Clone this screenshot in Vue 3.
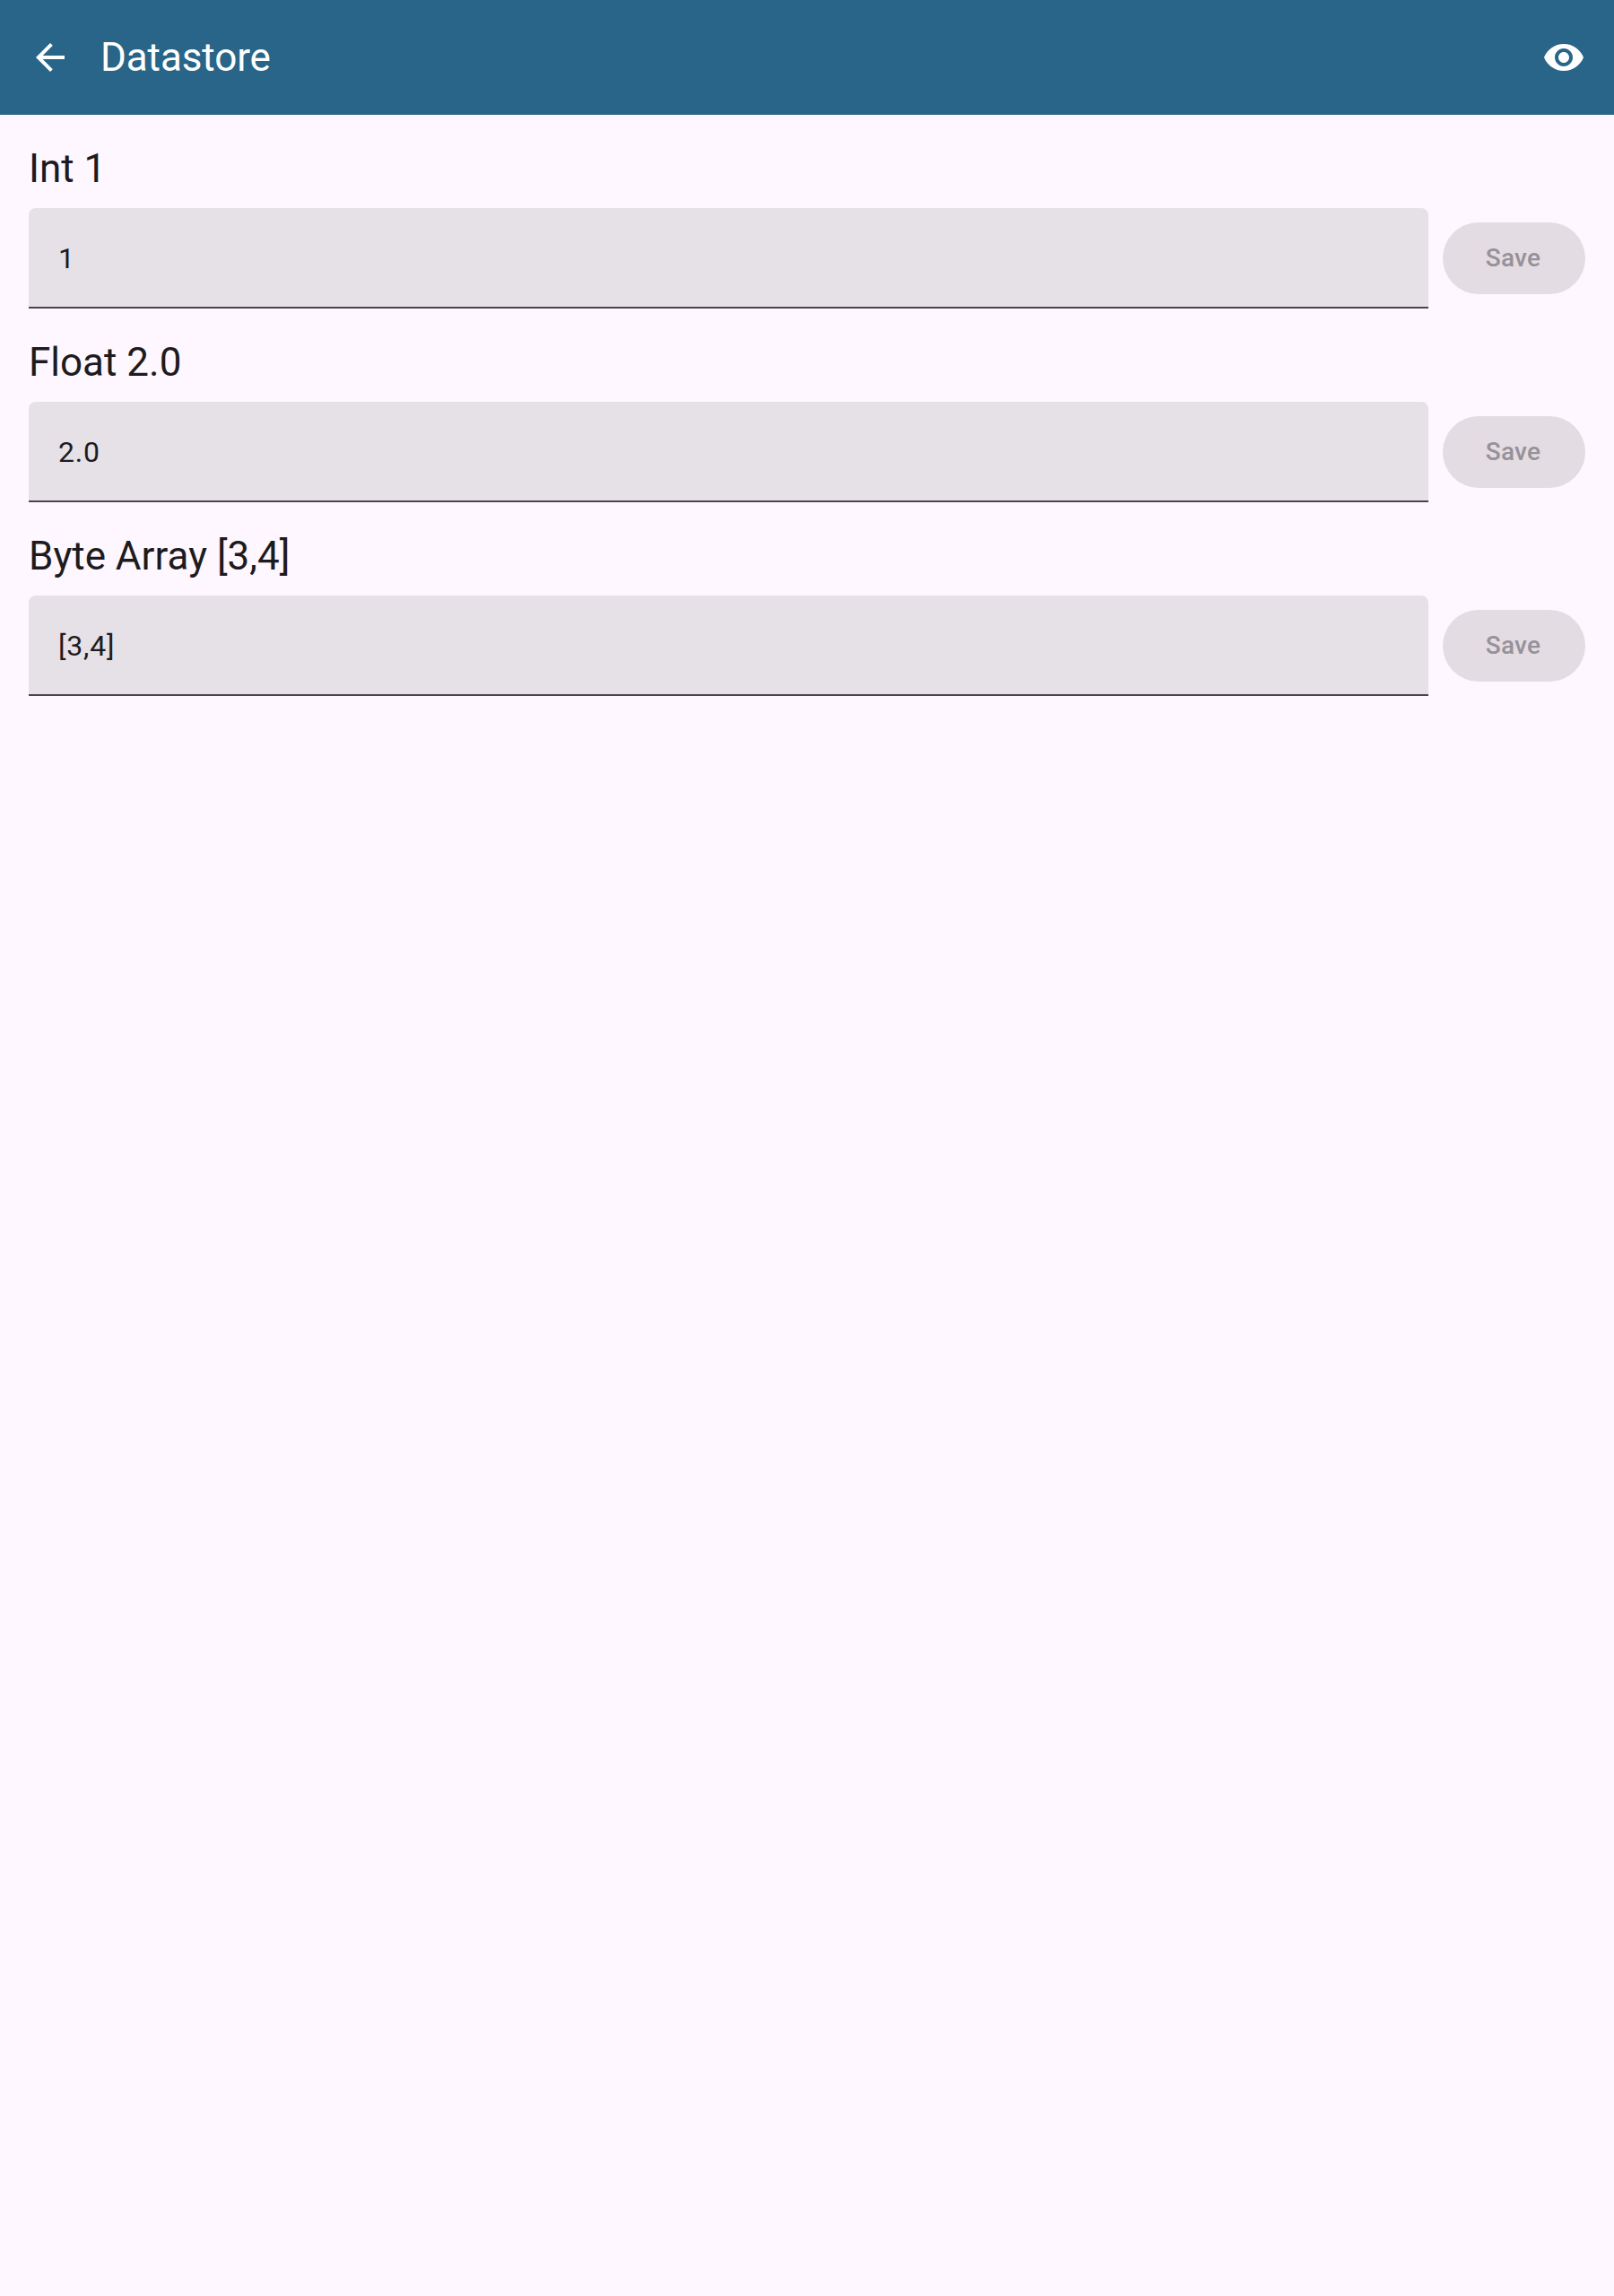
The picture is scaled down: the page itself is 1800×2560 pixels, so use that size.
<script setup>
import { ref } from 'vue'

const entries = ref([
  { label: 'Int 1', value: '1' },
  { label: 'Float 2.0', value: '2.0' },
  { label: 'Byte Array [3,4]', value: '[3,4]' },
])
</script>

<template>
  <div class="screen">
    <header class="app-bar">
      <svg class="icon" viewBox="0 0 24 24" aria-hidden="true">
        <path d="M20 11H7.83l5.59-5.59L12 4l-8 8 8 8 1.41-1.41L7.83 13H20v-2z" />
      </svg>
      <h1 class="title">Datastore</h1>
      <svg class="icon" viewBox="0 0 24 24" aria-hidden="true">
        <path
          d="M12 4.5C7 4.5 2.73 7.61 1 12c1.73 4.39 6 7.5 11 7.5s9.27-3.11 11-7.5c-1.73-4.39-6-7.5-11-7.5zM12 17c-2.76 0-5-2.24-5-5s2.24-5 5-5 5 2.24 5 5-2.24 5-5 5zm0-8c-1.66 0-3 1.34-3 3s1.34 3 3 3 3-1.34 3-3-1.34-3-3-3z"
        />
      </svg>
    </header>
    <main class="content">
      <section v-for="entry in entries" :key="entry.label" class="entry">
        <h2 class="label">{{ entry.label }}</h2>
        <div class="row">
          <div class="field">{{ entry.value }}</div>
          <button class="save" type="button" disabled>Save</button>
        </div>
      </section>
    </main>
  </div>
</template>

<style>
body {
  margin: 0;
  background: #fef7ff;
}
</style>

<style scoped>
.screen {
  min-height: 100vh;
  background: #fef7ff;
  color: #1d1b20;
  font-family: Roboto, sans-serif;
}

.app-bar {
  display: flex;
  align-items: center;
  height: 128px;
  padding: 0 32px;
  box-sizing: border-box;
  background: #296588;
  color: #fff;
}

.icon {
  flex: none;
  width: 48px;
  height: 48px;
  fill: currentColor;
}

.title {
  flex: 1;
  margin: 0 32px;
  font-size: 44px;
  font-weight: 400;
  line-height: 56px;
  letter-spacing: -0.1px;
}

.content {
  display: flex;
  flex-direction: column;
  gap: 32px;
  padding: 32px;
}

.label {
  margin: 0 0 16px;
  font-size: 44px;
  font-weight: 400;
  line-height: 56px;
}

.row {
  display: flex;
  align-items: center;
  gap: 16px;
}

.field {
  flex: 1;
  height: 112px;
  padding: 32px 32px 30px 33px;
  box-sizing: border-box;
  border-radius: 8px 8px 0 0;
  background: linear-gradient(#49454f, #49454f) bottom / 100% 2px no-repeat #e6e0e7;
  font-size: 32px;
  line-height: 48px;
  letter-spacing: 0.8px;
}

.save {
  width: 159px;
  height: 80px;
  padding: 0 2px 0 0;
  border: 0;
  border-radius: 40px;
  background: #e3dce3;
  color: #979198;
  font-family: inherit;
  font-size: 28px;
  font-weight: 500;
  line-height: 40px;
  letter-spacing: 0.2px;
}
</style>
